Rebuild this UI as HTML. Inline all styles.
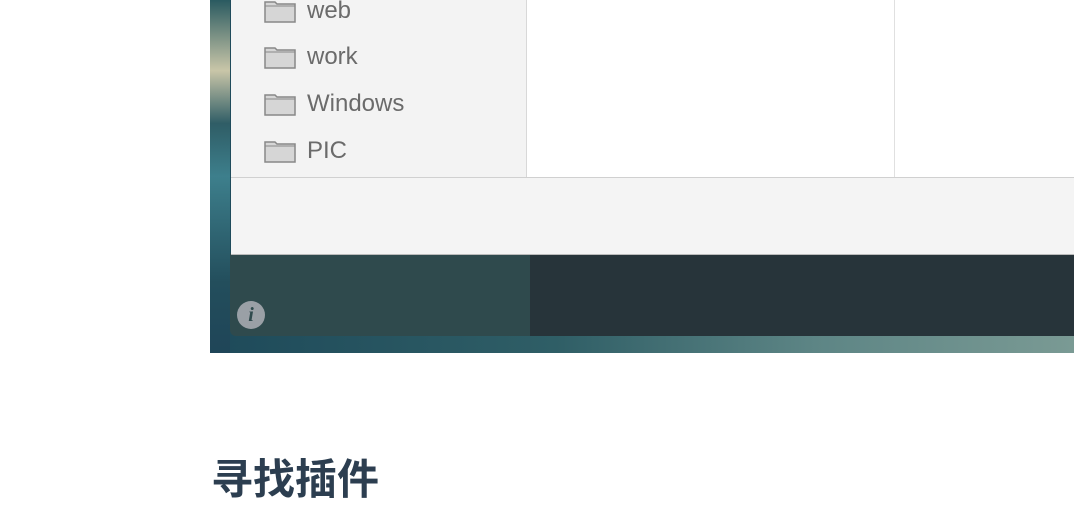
<!DOCTYPE html>
<html><head><meta charset="utf-8"><style>
body{margin:0;width:1074px;height:492px;background:#fff;position:relative;overflow:hidden;font-family:"Liberation Sans","Noto Sans CJK SC",sans-serif}
.a{position:absolute}
.item{position:absolute;left:264px;font-size:24px;color:#6b6b6b;display:flex;align-items:center}
.item svg{margin-right:11px}
</style></head><body>
<div class="a" style="left:210px;top:0;width:864px;height:353px;background:linear-gradient(90deg,#1e4a5a,#2f5e66 40%,#5d8585 70%,#7a9a94)"></div>
<div class="a" style="left:210px;top:0;width:20px;height:353px;background:linear-gradient(180deg,#2a5a60,#c9c6a8 20%,#2f5d66 35%,#3d7f8c 50%,#234e5c 80%,#1f4558)"></div>
<div class="a" style="left:230px;top:253px;width:300px;height:83px;background:#2f4a4d;border-radius:0 0 0 6px"></div>
<div class="a" style="left:530px;top:253px;width:544px;height:83px;background:#27343a"></div>
<div class="a" style="left:231px;top:0;width:295px;height:178px;background:#f3f3f3;border-right:1px solid #d8d8d8"></div>
<div class="a" style="left:527px;top:0;width:547px;height:178px;background:#fff"></div>
<div class="a" style="left:894px;top:0;width:1px;height:178px;background:#e0e0e0"></div>
<div class="a" style="left:231px;top:177px;width:843px;height:76px;background:#f4f4f4;border-top:1px solid #d0d0d0;border-bottom:1px solid #bbb"></div>
<div class="item" style="top:-3px"><svg width="32" height="24" viewBox="0 0 32 24"><path d="M1 3h10l2 2h18v18H1z" fill="#d6d6d6" stroke="#888" stroke-width="1.5"/><path d="M1 7h30" stroke="#888" stroke-width="1"/></svg>web</div>
<div class="item" style="top:43px"><svg width="32" height="24" viewBox="0 0 32 24"><path d="M1 3h10l2 2h18v18H1z" fill="#d6d6d6" stroke="#888" stroke-width="1.5"/><path d="M1 7h30" stroke="#888" stroke-width="1"/></svg>work</div>
<div class="item" style="top:90px"><svg width="32" height="24" viewBox="0 0 32 24"><path d="M1 3h10l2 2h18v18H1z" fill="#d6d6d6" stroke="#888" stroke-width="1.5"/><path d="M1 7h30" stroke="#888" stroke-width="1"/></svg>Windows</div>
<div class="item" style="top:137px"><svg width="32" height="24" viewBox="0 0 32 24"><path d="M1 3h10l2 2h18v18H1z" fill="#d6d6d6" stroke="#888" stroke-width="1.5"/><path d="M1 7h30" stroke="#888" stroke-width="1"/></svg>PIC</div>
<div class="a" style="left:237px;top:301px;width:28px;height:28px;border-radius:50%;background:#9aa0a6;color:#2f4a4d;font:italic bold 20px 'Liberation Serif',serif;text-align:center;line-height:28px">i</div>
<div class="a" style="left:211px;top:446px;font-size:42px;font-weight:bold;color:#2c3e50;font-family:'Liberation Sans','Noto Sans CJK SC',sans-serif">寻找插件</div>
</body></html>
